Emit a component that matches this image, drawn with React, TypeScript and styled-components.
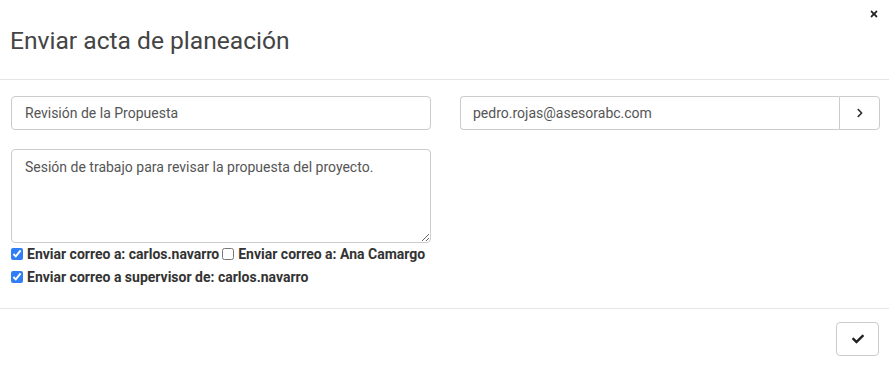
import React, { useState } from "react";
import styled, { createGlobalStyle } from "styled-components";
import { FaChevronRight, FaCheck, FaTimes } from "react-icons/fa";

const GlobalStyle = createGlobalStyle`
    html, body {
        margin: 0;
        padding: 0;
        background: #ffffff;
        font-family: Roboto, "Liberation Sans", Arial, sans-serif;
        color: #333333;
    }
    * { box-sizing: border-box; }
`

const Modal = styled.div`
    width: 889px;
    height: 366px;
    background: #ffffff;
    display: flex;
    flex-direction: column;
`

const Header = styled.div`
    position: relative;
    height: 80px;
    border-bottom: 1px solid #e5e5e5;
    display: flex;
    align-items: center;
    padding: 0 10px;
`

const Title = styled.h4`
    margin: 0;
    padding-top: 2px;
    font-size: 24.6px;
    font-weight: 400;
    color: #444444;
`

const CloseButton = styled.button`
    position: absolute;
    top: 9px;
    right: 10px;
    border: none;
    background: none;
    padding: 0;
    color: #222222;
    font-size: 10px;
    line-height: 1;
    cursor: pointer;
    display: flex;
`

const Body = styled.div`
    flex: 1;
    display: grid;
    grid-template-columns: 420px 420px;
    column-gap: 29px;
    padding: 16px 10px 0 11px;
    align-items: start;
`

const Column = styled.div`
    display: flex;
    flex-direction: column;
`

const TextInput = styled.input`
    width: 100%;
    height: 34px;
    border: 1px solid #cccccc;
    border-radius: 4px;
    padding: 0 13px;
    font-family: inherit;
    font-size: 14px;
    color: #555555;
    outline: none;
`

const TextArea = styled.textarea`
    margin-top: 19px;
    width: 100%;
    height: 94px;
    border: 1px solid #cccccc;
    border-radius: 4px;
    padding: 7px 13px;
    font-family: inherit;
    font-size: 14px;
    line-height: 20px;
    color: #555555;
    outline: none;
    resize: vertical;
    display: block;
`

const InputGroup = styled.div`
    display: flex;
    height: 34px;
`

const GroupInput = styled(TextInput)`
    border-radius: 4px 0 0 4px;
    border-right: none;
    padding: 0 12px;
`

const GroupButton = styled.button`
    width: 41px;
    flex-shrink: 0;
    border: 1px solid #cccccc;
    border-radius: 0 4px 4px 0;
    background: #ffffff;
    color: #333333;
    font-size: 10px;
    display: flex;
    align-items: center;
    justify-content: center;
    cursor: pointer;
`

const CheckRow = styled.div`
    display: flex;
    align-items: center;
    flex-wrap: nowrap;
    margin-top: ${(p: { $top: number }) => p.$top}px;
`

const CheckLabel = styled.label`
    display: inline-flex;
    align-items: center;
    font-size: 14px;
    font-weight: 700;
    color: #333333;
    margin-right: 3px;
    white-space: nowrap;
`

const CheckBox = styled.input`
    width: 12px;
    height: 12px;
    margin: 0 4px 0 0;
    accent-color: #2f7ef6;
`

const Footer = styled.div`
    height: 58px;
    border-top: 1px solid #e5e5e5;
    display: flex;
    justify-content: flex-end;
    align-items: center;
    padding: 0 10px;
`

const SubmitButton = styled.button`
    width: 43px;
    height: 34px;
    margin-top: 3px;
    border: 1px solid #cccccc;
    border-radius: 4px;
    background: #ffffff;
    color: #222222;
    font-size: 12px;
    display: flex;
    align-items: center;
    justify-content: center;
    cursor: pointer;
`

const App: React.FC = () => {
    const [ subject, setSubject ] = useState('Revisión de la Propuesta');
    const [ notes, setNotes ] = useState('Sesión de trabajo para revisar la propuesta del proyecto.');
    const [ email, setEmail ] = useState('pedro.rojas@asesorabc.com');
    const [ sendCarlos, setSendCarlos ] = useState(true);
    const [ sendAna, setSendAna ] = useState(false);
    const [ sendSupervisor, setSendSupervisor ] = useState(true);

    return(
        <>
            <GlobalStyle/>
            <Modal>
                <Header>
                    <Title>Enviar acta de planeación</Title>
                    <CloseButton aria-label="Cerrar"><FaTimes/></CloseButton>
                </Header>
                <Body>
                    <Column>
                        <TextInput value={subject} onChange={(e) => setSubject(e.target.value)}/>
                        <TextArea value={notes} onChange={(e) => setNotes(e.target.value)}/>
                        <CheckRow $top={3}>
                            <CheckLabel>
                                <CheckBox type="checkbox" checked={sendCarlos} onChange={(e) => setSendCarlos(e.target.checked)}/>
                                Enviar correo a: carlos.navarro
                            </CheckLabel>
                            <CheckLabel>
                                <CheckBox type="checkbox" checked={sendAna} onChange={(e) => setSendAna(e.target.checked)}/>
                                Enviar correo a: Ana Camargo
                            </CheckLabel>
                        </CheckRow>
                        <CheckRow $top={7}>
                            <CheckLabel>
                                <CheckBox type="checkbox" checked={sendSupervisor} onChange={(e) => setSendSupervisor(e.target.checked)}/>
                                Enviar correo a supervisor de: carlos.navarro
                            </CheckLabel>
                        </CheckRow>
                    </Column>
                    <Column>
                        <InputGroup>
                            <GroupInput value={email} onChange={(e) => setEmail(e.target.value)}/>
                            <GroupButton><FaChevronRight/></GroupButton>
                        </InputGroup>
                    </Column>
                </Body>
                <Footer>
                    <SubmitButton><FaCheck/></SubmitButton>
                </Footer>
            </Modal>
        </>
    );
};

export default App;
